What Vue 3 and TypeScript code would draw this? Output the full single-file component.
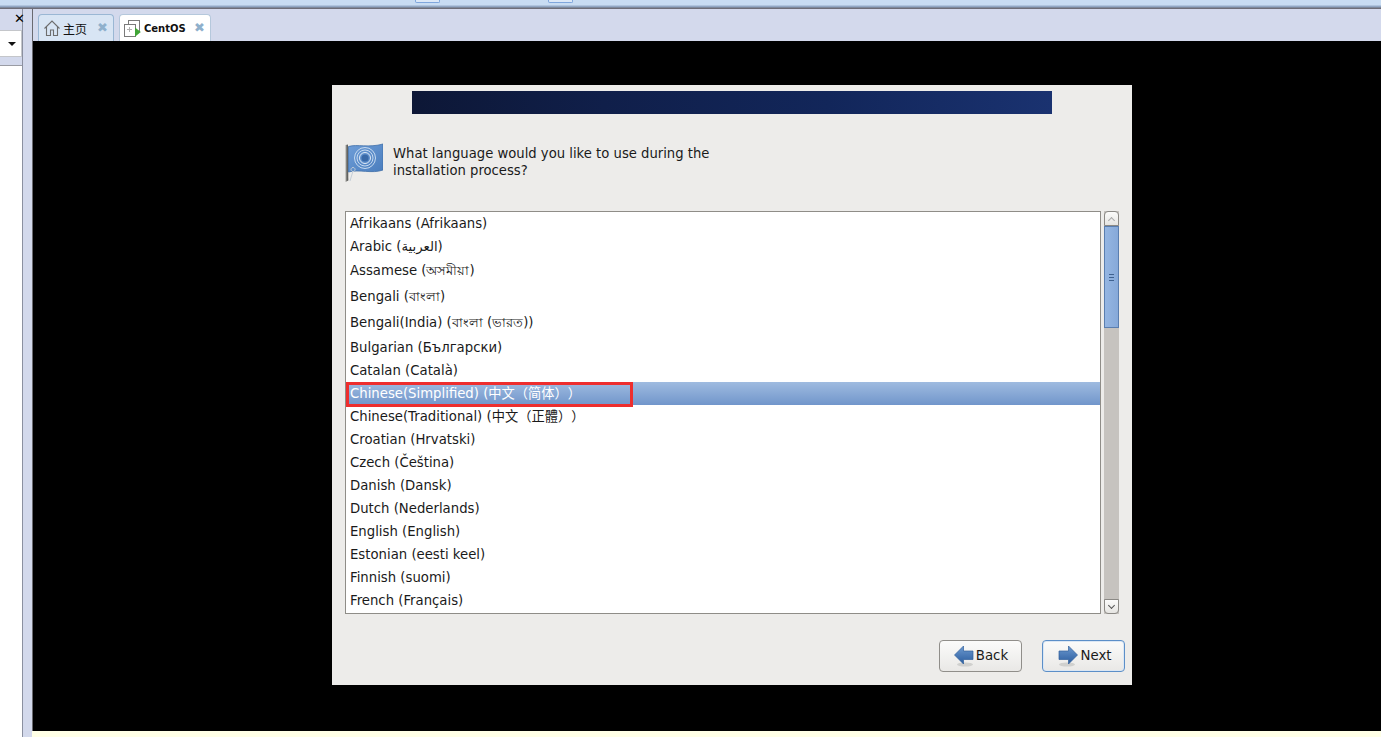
<script setup lang="ts">
interface Lang { label: string; size?: 'mid' | 'tall' | 'taller'; selected?: boolean }
const languages: Lang[] = [
  { label: 'Afrikaans (Afrikaans)' },
  { label: 'Arabic (العربية)' },
  { label: 'Assamese (অসমীয়া)', size: 'mid' },
  { label: 'Bengali (বাংলা)', size: 'taller' },
  { label: 'Bengali(India) (বাংলা (ভারত))', size: 'tall' },
  { label: 'Bulgarian (Български)' },
  { label: 'Catalan (Català)' },
  { label: 'Chinese(Simplified) (中文（简体））', selected: true },
  { label: 'Chinese(Traditional) (中文（正體））' },
  { label: 'Croatian (Hrvatski)' },
  { label: 'Czech (Čeština)' },
  { label: 'Danish (Dansk)' },
  { label: 'Dutch (Nederlands)' },
  { label: 'English (English)' },
  { label: 'Estonian (eesti keel)' },
  { label: 'Finnish (suomi)' },
  { label: 'French (Français)' },
]
</script>

<template>
  <div class="page">
    <header class="topbar">
      <span class="tool first"></span>
      <span class="tool second"></span>
    </header>
    <div class="body">
      <aside class="sidebar">
        <div class="panel">
          <div class="panel-close">✕</div>
          <div class="combo"><span class="caret"></span></div>
          <div class="tree"></div>
        </div>
      </aside>
      <main class="main">
        <nav class="tabs">
          <div class="tab">
            <svg class="tab-icon" viewBox="0 0 16 16" width="16" height="16">
              <path d="M0.500 8.500 8 1 15.500 8.500M2.500 6.500v9h4V10h3v5.500h4v-9" fill="none" stroke="#6d6d6d" stroke-width="1.100"/>
            </svg>
            <span class="tab-label">主页</span>
            <span class="tab-x">✖</span>
          </div>
          <div class="tab active">
            <svg class="tab-icon" viewBox="0 0 17 17" width="17" height="17">
              <rect x="4.500" y="0.500" width="11" height="11" fill="#fff" stroke="#7a7a7a"/>
              <rect x="0.500" y="4.500" width="11" height="12" fill="#fff" stroke="#7a7a7a"/>
              <path d="M3 9.500h5M5.500 7v5" stroke="#b0b0b0"/>
              <path d="M11 7.500 16.800 12 11 16.800Z" fill="#3fa535"/>
            </svg>
            <span class="tab-label bold">CentOS</span>
            <span class="tab-x">✖</span>
          </div>
        </nav>
        <section class="viewport">
          <div class="installer">
            <div class="banner"></div>
            <div class="prompt">
              <svg class="flag" viewBox="0 0 38 39" width="38" height="39">
                <defs>
                  <linearGradient id="pole" x1="0" x2="1" y1="0" y2="0">
                    <stop offset="0" stop-color="#a4a4a0"/>
                    <stop offset="1" stop-color="#484846"/>
                  </linearGradient>
                  <linearGradient id="cloth" x1="0" x2="1" y1="0" y2="1">
                    <stop offset="0" stop-color="#6f9ed8"/>
                    <stop offset="1" stop-color="#4a7dbd"/>
                  </linearGradient>
                </defs>
                <path d="M0.500 2 3 1.500l0.300 36-2.800 1.500Z" fill="url(#pole)"/>
                <path d="M3.500 3.500C12 1 24 5 38 1V27C27 31 14 26 3.500 29Z" fill="url(#cloth)" stroke="#3f6ea8" stroke-width="0.800"/>
                <g fill="none" stroke="#c6daf0">
                  <circle cx="20" cy="15" r="10.500"/>
                  <circle cx="20" cy="15" r="8"/>
                  <circle cx="20" cy="15" r="5.500" stroke="#dfeaf6"/>
                </g>
                <circle cx="20" cy="15" r="3.500" fill="#3a6aa8"/>
                <path d="M8 24.500a2 2 0 1 0 .1 0M8 28 5 38" fill="none" stroke="#c4ced8" stroke-width="1"/>
              </svg>
              <p class="question">What language would you like to use during the<br />installation process?</p>
            </div>
            <div class="chooser">
              <ul class="list">
                <li
                  v-for="lang in languages"
                  :key="lang.label"
                  class="row"
                  :class="[lang.size, { selected: lang.selected }]"
                >
                  {{ lang.label }}
                  <span v-if="lang.selected" class="marker"></span>
                </li>
              </ul>
              <div class="scrollbar">
                <div class="step up"><span class="chev"></span></div>
                <div class="thumb"><span class="grip"></span></div>
                <div class="rest"></div>
                <div class="step down"><span class="chev"></span></div>
              </div>
            </div>
            <div class="actions">
              <button class="btn" type="button">
                <svg viewBox="0 0 20 22" width="20" height="22">
                  <defs>
                    <linearGradient id="arrow" x1="0" x2="0" y1="0" y2="1">
                      <stop offset="0" stop-color="#6d9ad0"/>
                      <stop offset="1" stop-color="#2a5c9e"/>
                    </linearGradient>
                  </defs>
                  <ellipse cx="11" cy="19.500" rx="8" ry="2" fill="#d0d0ce"/>
                  <path d="M0.500 10 9.500 1V6H19V14.500H9.500V19Z" fill="url(#arrow)" stroke="#31609c" stroke-width="0.700"/>
                </svg>
                <span>Back</span>
              </button>
              <button class="btn next" type="button">
                <svg viewBox="0 0 20 22" width="20" height="22">
                  <ellipse cx="9" cy="19.500" rx="8" ry="2" fill="#d0d0ce"/>
                  <path d="M19.500 10 10.500 1V6H1V14.500H10.500V19Z" fill="url(#arrow)" stroke="#31609c" stroke-width="0.700"/>
                </svg>
                <span>Next</span>
              </button>
            </div>
          </div>
        </section>
        <div class="statusline"></div>
      </main>
    </div>
  </div>
</template>

<style>
html, body { margin: 0; background: #fff; overflow: hidden; }
</style>

<style scoped>
.page {
  width: 1381px;
  height: 737px;
  display: flex;
  flex-direction: column;
  overflow: hidden;
  font-family: "DejaVu Sans", "Noto Sans CJK SC", sans-serif;
  text-spacing-trim: space-all;
}
.topbar {
  height: 9px;
  flex: none;
  box-sizing: border-box;
  display: flex;
  align-items: flex-start;
  background: linear-gradient(#c8dcf2 0, #c8dcf2 5px, #97acc8 6px, #8da3c0 7px, #6e6e78 8px);
  padding-left: 415px;
}
.tool {
  width: 25px;
  height: 3px;
  box-sizing: border-box;
  border: 1px solid #7fa6dc;
  border-top: 0;
  background: #dce8f7;
  border-radius: 0 0 2px 2px;
}
.second { margin-left: 108px; }
.body { flex: 1; display: flex; min-height: 0; }
.sidebar {
  width: 33px;
  flex: none;
  box-sizing: border-box;
  background: #d3d9ec;
  border-right: 1px solid #6a6a70;
  padding-right: 9px;
}
.panel {
  height: 100%;
  box-sizing: border-box;
  display: flex;
  flex-direction: column;
  border-right: 1px solid #8b90a0;
}
.panel-close {
  height: 21px;
  flex: none;
  box-sizing: border-box;
  display: flex;
  justify-content: flex-end;
  padding: 1px 0 0;
  font-size: 13px;
  font-weight: 700;
  line-height: 17px;
  color: #000;
  width: 25px;
}
.combo {
  height: 27px;
  flex: none;
  box-sizing: border-box;
  background: #fff;
  border: 1px solid #c4c6ca;
  border-left: 0;
  display: flex;
  align-items: center;
  justify-content: flex-end;
  padding-right: 5px;
}
.caret {
  width: 0;
  height: 0;
  border: 4px solid transparent;
  border-top: 4px solid #111;
  border-bottom: 0;
}
.tree {
  flex: 1;
  margin-top: 8px;
  background: #fff;
  border-top: 1px solid #9a9ca4;
}
.main { flex: 1; display: flex; flex-direction: column; min-width: 0; }
.tabs {
  height: 32px;
  flex: none;
  box-sizing: border-box;
  background: #d3d9ec;
  display: flex;
  align-items: flex-end;
  gap: 5px;
  padding-left: 5px;
}
.tab {
  width: 76px;
  height: 27px;
  box-sizing: border-box;
  background: #d8e5f4;
  border: 1px solid #9ab7d4;
  border-bottom: 0;
  border-radius: 4px 4px 0 0;
  display: flex;
  align-items: center;
  padding: 0 4px 0 5px;
  font-size: 12px;
  color: #111;
}
.tab.active { width: 92px; background: #fff; border-color: #b5c8dc; padding-left: 4px; }
.tab-icon { flex: none; }
.tab-label { margin-left: 3px; flex: 1; white-space: nowrap; font-family: "Noto Sans CJK SC", sans-serif; }
.tab-label.bold { font-family: "DejaVu Sans", sans-serif; font-weight: 700; font-size: 10px; margin-left: 3px; }
.tab-x { color: #8fb0cc; font-size: 13px; line-height: 13px; margin-right: 1px; margin-top: -2px; }
.viewport {
  flex: 1;
  min-height: 0;
  background: #000;
  box-sizing: border-box;
  padding: 44px 0 0 299px;
}
.installer {
  width: 800px;
  height: 600px;
  background: #edecea;
  box-sizing: border-box;
  padding: 6px 13px 0;
  display: flex;
  flex-direction: column;
}
.banner {
  width: 640px;
  height: 23px;
  flex: none;
  margin-left: 67px;
  background: linear-gradient(90deg, #0d1736 0%, #101f4a 30%, #12265a 65%, #1a3270 100%);
}
.prompt {
  margin-top: 29px;
  display: flex;
  align-items: flex-start;
  height: 68px;
  flex: none;
}
.flag { flex: none; }
.question {
  margin: 2px 0 0 10px;
  font-size: 13.200px;
  line-height: 17px;
  color: #1a1a1a;
}
.chooser { display: flex; gap: 3px; height: 403px; flex: none; width: 774px; }
.list {
  width: 756px;
  margin: 0;
  padding: 0;
  list-style: none;
  box-sizing: border-box;
  background: #fff;
  border: 1px solid #8f8d88;
  overflow: hidden;
}
.row {
  position: relative;
  height: 23px;
  line-height: 23px;
  padding-left: 4px;
  font-size: 13.250px;
  color: #1a1a1a;
  white-space: nowrap;
}
.row.mid { height: 25px; line-height: 25px; }
.row.tall { height: 26px; line-height: 26px; }
.row.taller { height: 27px; line-height: 27px; }
.row.selected {
  background: linear-gradient(#9fbbe0, #7196cb);
  color: #fff;
}
.marker {
  position: absolute;
  left: 0;
  top: 0;
  width: 287px;
  height: 25px;
  box-sizing: border-box;
  border: 3px solid #ee2e2e;
}
.scrollbar {
  width: 15px;
  display: flex;
  flex-direction: column;
  background: #c6c3bf;
}
.step {
  height: 15px;
  flex: none;
  box-sizing: border-box;
  background: linear-gradient(#fbfbfa, #e6e5e2);
  border: 1px solid #8b8985;
  display: flex;
  align-items: center;
  justify-content: center;
}
.step.up { border-radius: 4px 4px 0 0; }
.step.down { border-radius: 0 0 4px 4px; }
.chev {
  width: 4px;
  height: 4px;
  border-left: 1px solid #555;
  border-top: 1px solid #555;
  transform: rotate(45deg);
  margin-top: 3px;
}
.step.up .chev { border-color: #aaa; }
.step.down .chev { transform: rotate(225deg); margin-top: -3px; }
.thumb {
  height: 102px;
  flex: none;
  box-sizing: border-box;
  background: linear-gradient(90deg, #95b6e2, #86a9d9);
  border: 1px solid #5a7eaf;
  display: flex;
  align-items: center;
  justify-content: center;
}
.grip {
  width: 5px;
  height: 7px;
  background: repeating-linear-gradient(#3f618f 0, #3f618f 1px, transparent 1px, transparent 3px);
}
.rest { flex: 1; }
.actions {
  display: flex;
  justify-content: flex-end;
  gap: 20px;
  margin-top: 26px;
  width: 780px;
}
.btn {
  width: 83px;
  height: 32px;
  box-sizing: border-box;
  border: 1px solid #908e8a;
  border-radius: 4px;
  background: linear-gradient(#fbfbfa, #e9e8e6);
  display: flex;
  align-items: center;
  justify-content: center;
  gap: 2px;
  padding: 0 0 1px 1px;
  font-family: "DejaVu Sans", sans-serif;
  font-size: 13.330px;
  color: #1a1a1a;
}
.btn.next { border-color: #5c8fc8; box-shadow: inset 0 0 0 1px #dbe7f4; padding-left: 3px; }
.statusline { height: 6px; flex: none; background: #ffffe6; margin-left: -1px; position: relative; }
</style>
